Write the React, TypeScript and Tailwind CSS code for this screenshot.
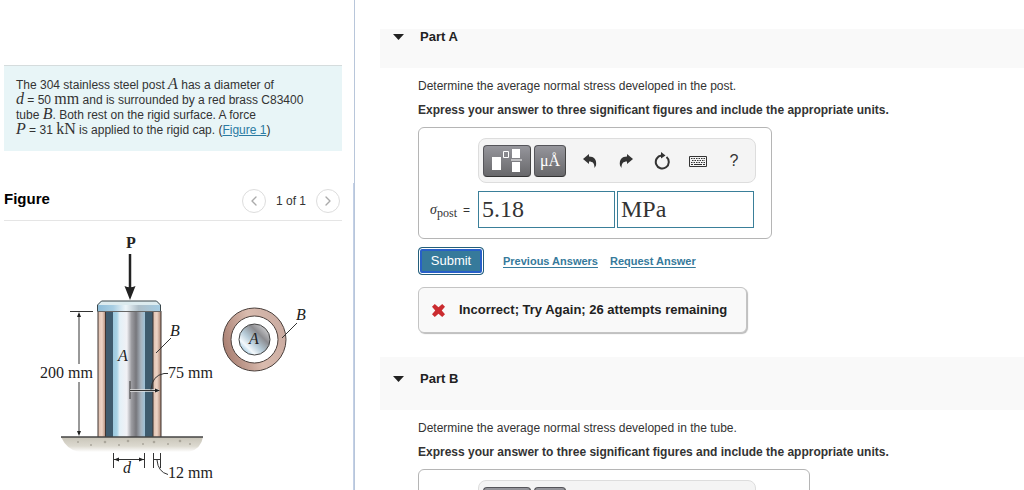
import type { ReactNode } from "react";
import { useState } from "react";
import { ChevronLeft, ChevronRight } from "lucide-react";

function PostFigure() {
  return (
    <svg
      viewBox="4 221 338 269"
      className="block w-full font-['Liberation_Serif',serif]"
      fontSize="16"
      fill="#222"
      role="img"
      aria-label="Post A inside tube B under load P"
    >
      <defs>
        <linearGradient id="steel">
          <stop offset="0" stopColor="#9cc9de" />
          <stop offset="0.12" stopColor="#a9d3e6" />
          <stop offset="0.2" stopColor="#e3f0f7" />
          <stop offset="0.42" stopColor="#f1f1f5" />
          <stop offset="0.56" stopColor="#9c9ca1" />
          <stop offset="0.7" stopColor="#77777c" />
          <stop offset="0.85" stopColor="#a9b4bf" />
          <stop offset="1" stopColor="#9cc6de" />
        </linearGradient>
        <linearGradient id="cap">
          <stop offset="0" stopColor="#8dbcd8" />
          <stop offset="0.25" stopColor="#a8cee3" />
          <stop offset="0.45" stopColor="#edf5f9" />
          <stop offset="0.65" stopColor="#aebfc9" />
          <stop offset="1" stopColor="#a4cce3" />
        </linearGradient>
        <linearGradient id="brass">
          <stop offset="0" stopColor="#dfbfae" />
          <stop offset="0.5" stopColor="#ecd4c6" />
          <stop offset="1" stopColor="#a98270" />
        </linearGradient>
        <linearGradient id="ring" x1="0" y1="0.6" x2="1" y2="0.3">
          <stop offset="0" stopColor="#a97f72" />
          <stop offset="0.5" stopColor="#d9bbae" />
          <stop offset="1" stopColor="#c9aaa0" />
        </linearGradient>
        <linearGradient id="disc" x1="0.1" y1="0.9" x2="0.85" y2="0.15">
          <stop offset="0" stopColor="#8fc0dc" />
          <stop offset="0.22" stopColor="#f4f9fc" />
          <stop offset="0.45" stopColor="#b6cbd8" />
          <stop offset="0.75" stopColor="#8c8c90" />
          <stop offset="1" stopColor="#c4c4c6" />
        </linearGradient>
        <linearGradient id="ground" x2="0" y2="1">
          <stop offset="0" stopColor="#c8c4b8" />
          <stop offset="0.6" stopColor="#dcd9cf" />
          <stop offset="1" stopColor="#fff" />
        </linearGradient>
      </defs>

      {/* load */}
      <text x="126" y="248" fontWeight="bold">P</text>
      <path d="M130 254v34" stroke="#222" strokeWidth="2.5" />
      <path d="M124.500 286q5.500 2.500 11 0L130 300z" />

      {/* ground */}
      <path d="M61 437h142q-2 12-14 15H79q-12-2-18-15z" fill="url(#ground)" />
      <g fill="#aaa69b">
        <circle cx="78" cy="442" r="1" />
        <circle cx="91" cy="445" r="1" />
        <circle cx="105" cy="442" r="1.300" />
        <circle cx="119" cy="445" r="1" />
        <circle cx="128" cy="441" r="1.300" />
        <circle cx="143" cy="444" r="1" />
        <circle cx="154" cy="442" r="1.300" />
        <circle cx="168" cy="444" r="1" />
        <circle cx="180" cy="441" r="1.300" />
        <circle cx="190" cy="444" r="1" />
      </g>

      {/* tube and post */}
      <rect x="98" y="311" width="8" height="126" fill="url(#brass)" />
      <rect x="105" y="311" width="8" height="126" fill="#3e5b6e" />
      <rect x="113" y="311" width="33" height="126" fill="url(#steel)" />
      <rect x="145" y="311" width="8" height="126" fill="#3e5b6e" />
      <rect x="153" y="311" width="8" height="126" fill="url(#brass)" />
      <path d="M98 311v126M161 311v126M153 311v126M105.500 311v126" stroke="#3f3430" />
      <path d="M97.500 305l4-4h55l4 4v6.500h-63z" fill="url(#cap)" />
      <path d="M97.500 305l4-4h55l4 4z" fill="#dcebef" />
      <path d="M97.500 311.500V305l4-4h55l4 4v6.500" fill="none" stroke="#3b474b" />
      <path d="M98 311.500h63" stroke="#666" />
      <path d="M61 437h142" stroke="#444" strokeWidth="1.500" />

      {/* dimensions */}
      <g stroke="#333" fill="none">
        <path d="M70 311.500h23M79 314v50M79 382v52" />
        <path d="M130 381v18" />
        <path d="M130 390.500h29" stroke="#e5e5e5" strokeWidth="2.500" />
        <path d="M130 390.500h29" />
        <path d="M168 373.500h-4q-12 2-13 16M171 338l-15 15" />
        <path d="M113.500 453v15M144.500 453v15M114 459.500h31" />
        <path d="M153.500 453v15M160.500 453v15M153 459.500h8M157 460q1 12 11 14.500" />
      </g>
      <path d="M79 312l2 5h-4zM79 436l2-5h-4zM160 390.500l-5-2v4zM114 459.500l5-2v4zM144 459.500l-5-2v4z" />
      <text x="40" y="378">200 mm</text>
      <text x="168" y="378">75 mm</text>
      <text x="168" y="478">12 mm</text>
      <g fontStyle="italic">
        <text x="118" y="361">A</text>
        <text x="170" y="336">B</text>
        <text x="123" y="473">d</text>
        <text x="296" y="320">B</text>
      </g>

      {/* section */}
      <circle cx="254.500" cy="339.500" r="31.500" fill="url(#ring)" stroke="#4b403c" />
      <circle cx="254.500" cy="339.500" r="23.500" fill="#fff" stroke="#4b403c" />
      <circle cx="254.500" cy="339.500" r="15.500" fill="url(#disc)" stroke="#444" />
      <path d="M297 323l-15 15" stroke="#333" />
      <text x="249" y="344" fontStyle="italic">A</text>
    </svg>
  );
}

function MathText({ children, italic = false }: { children: ReactNode; italic?: boolean }) {
  return (
    <span className={`font-['Liberation_Serif',serif] text-base leading-[8px] ${italic ? "italic" : ""}`}>
      {children}
    </span>
  );
}

function Toolbar() {
  const dark =
    "flex h-8 items-center justify-center rounded border border-[#55555a] border-b-[#333] border-r-[#444] bg-linear-to-b from-[#96969c] to-[#68686b] text-white";
  const plain = "flex h-8 w-9 items-center justify-center text-[#333]";

  return (
    <div className="flex h-[45px] w-[278px] items-center rounded-lg border border-[#ddd] bg-[#f4f4f4] pl-1">
      <button type="button" aria-label="Templates" className={`${dark} w-12`}>
        <svg width="30" height="25" viewBox="0 0 30 25" fill="currentColor">
          <path d="M0 9h9v13H0zM20 1h8v9h-8zM19 11.500h11v1H19zM20 14h8v10h-8z" />
          <path d="M11.500 3.500h5v6h-5z" fill="none" stroke="currentColor" />
        </svg>
      </button>
      <button
        type="button"
        aria-label="Symbols"
        className={`${dark} ml-[3px] w-8 font-['Liberation_Serif',serif] text-base`}
      >
        μÅ
      </button>
      <button type="button" aria-label="Undo" className={`${plain} ml-1.5`}>
        <svg width="14" height="14" viewBox="0 0 14 14" fill="currentColor">
          <path d="M0 5L6 0v2.500c5 0 8 3 7 9l-1.500 2.500C11.500 9.500 10 7.500 6 7.500V10z" />
        </svg>
      </button>
      <button type="button" aria-label="Redo" className={plain}>
        <svg width="14" height="14" viewBox="0 0 14 14" fill="currentColor">
          <path d="M14 5L8 0v2.500c-5 0-8 3-7 9L2.500 14C2.500 9.500 4 7.500 8 7.500V10z" />
        </svg>
      </button>
      <button type="button" aria-label="Reset" className={plain}>
        <svg width="18" height="18" viewBox="0 0 18 18" fill="none">
          <path d="M13.500 5A6.500 6.500 0 1 1 8.500 3.500" stroke="currentColor" strokeWidth="2" />
          <path d="M8 0l4.500 3.500L8 6.500z" fill="currentColor" />
        </svg>
      </button>
      <button type="button" aria-label="Keyboard" className={plain}>
        <svg width="18" height="12" viewBox="0 0 18 12" fill="none" stroke="currentColor">
          <path d="M.5 1.500h17v10H.5z" />
          <path d="M2 3.500h14M3 5.500h13M2 7.500h14" strokeDasharray="1.500 1" />
          <path d="M2 9.500h2M5 9.500h8M14 9.500h2" />
        </svg>
      </button>
      <button type="button" aria-label="Help" className={`${plain} text-base`}>
        ?
      </button>
    </div>
  );
}

function PartHeader({ title, className }: { title: string; className: string }) {
  return (
    <h2 className={`bg-[#f9f9f9] text-[13px] leading-4 font-bold text-[#222] ${className}`}>
      <button type="button" className="flex h-4 items-center gap-4 pl-[13px]">
        <svg width="11" height="6" viewBox="0 0 11 6" fill="currentColor">
          <path d="M0 0h11L5.500 6z" />
        </svg>
        {title}
      </button>
    </h2>
  );
}

function Instructions({ member }: { member: string }) {
  return (
    <div className="flex flex-col gap-2 pt-2.5 text-xs leading-4">
      <p>Determine the average normal stress developed in the {member}.</p>
      <p className="font-bold">
        Express your answer to three significant figures and include the appropriate units.
      </p>
    </div>
  );
}

export default function App() {
  const [value, setValue] = useState("5.18");
  const [units, setUnits] = useState("MPa");
  const field =
    "h-[37px] w-[137px] border border-[#3a7f99] bg-white px-[3px] font-['Liberation_Serif',serif] text-2xl text-[#333] outline-none";
  const pager = "flex size-6 items-center justify-center rounded-full border border-[#ddd] text-[#aaa]";
  const link = "text-[11px] font-bold text-[#367a9b] underline underline-offset-2";

  return (
    <div className="flex h-screen overflow-hidden bg-white font-['Liberation_Sans',Arial,sans-serif] text-[#333]">
      <aside className="flex w-[355px] shrink-0 flex-col border-r border-[#b8c6da] pt-[65px] pl-1">
        <section className="mr-3 border-t border-[#d5dcdd] bg-[#e8f5f7] px-3 pt-3 pb-[13px] text-xs">
          <p className="leading-[15px]">
            The 304 stainless steel post <MathText italic>A</MathText> has a diameter of
            <br />
            <MathText italic>d</MathText> = 50 <MathText>mm</MathText> and is surrounded by a red brass C83400
            <br />
            tube <MathText italic>B</MathText>. Both rest on the rigid surface. A force
            <br />
            <MathText italic>P</MathText> = 31 <MathText>kN</MathText> is applied to the rigid cap. (
            <a href="#figure" className="text-[#2b7ba3] underline">
              Figure 1
            </a>
            )
          </p>
        </section>

        <section id="figure" className="mt-8 flex-1 border-r border-[#c3d0e6] pt-1 pr-[11px]">
          <header className="flex h-[34px] items-start justify-between border-b border-[#e5e5e5]">
            <h2 className="text-[15px] leading-6 font-bold text-black">Figure</h2>
            <div className="flex items-center gap-2.5 pt-0.5 pr-0.5 text-xs">
              <button type="button" aria-label="Previous figure" className={pager}>
                <ChevronLeft size={16} />
              </button>
              <span>1 of 1</span>
              <button type="button" aria-label="Next figure" className={pager}>
                <ChevronRight size={16} />
              </button>
            </div>
          </header>
          <PostFigure />
        </section>
      </aside>

      <main className="min-w-0 flex-1 pt-[29px] pl-[25px]">
        <section>
          <PartHeader title="Part A" className="pb-[23px]" />
          <form className="pl-[38px]" onSubmit={(e) => e.preventDefault()}>
            <Instructions member="post" />
            <div className="mt-[9px] flex w-[354px] flex-col items-end gap-2 rounded-md border border-[#b5b5b5] pt-2.5 pr-[15px] pb-2.5">
              <Toolbar />
              <div className="flex items-center">
                <label htmlFor="stress" className="flex items-center gap-1.5 pr-2 text-xs">
                  <span className="font-['Liberation_Serif',serif] text-sm">
                    <i>σ</i>
                    <sub className="text-xs">post</sub>
                  </span>
                  <span>=</span>
                </label>
                <div className="flex w-[278px] gap-0.5">
                  <input id="stress" value={value} onChange={(e) => setValue(e.target.value)} className={field} />
                  <input
                    aria-label="Units"
                    value={units}
                    onChange={(e) => setUnits(e.target.value)}
                    className={field}
                  />
                </div>
              </div>
            </div>

            <div className="mt-2 flex items-center">
              <button
                type="submit"
                className="h-7 w-[66px] rounded-sm border border-[#245f7a] bg-[#367a9b] text-[13px] text-white shadow-[inset_0_0_0_1px_#fff,inset_0_0_0_3px_#2860c8]"
              >
                Submit
              </button>
              <a href="#previous" className={`${link} ml-[19px]`}>
                Previous Answers
              </a>
              <a href="#request" className={`${link} ml-3`}>
                Request Answer
              </a>
            </div>

            <div
              role="status"
              className="mt-3 flex h-[46px] w-[329px] items-center gap-3.5 rounded-md border border-[#c4c4c4] bg-[#f9f9f9] pl-[13px] text-[13px] font-bold whitespace-nowrap text-[#222] shadow-[1px_1px_1px_#bbb]"
            >
              <svg width="13" height="13" viewBox="0 0 14 14" fill="#cb2c30" className="shrink-0">
                <path d="M3 0l4 3.500L11 0l3 3-3.500 4L14 11l-3 3-4-3.500L3 14l-3-3 3.500-4L0 3z" />
              </svg>
              Incorrect; Try Again; 26 attempts remaining
            </div>
          </form>
        </section>

        <section className="mt-6">
          <PartHeader title="Part B" className="pt-3.5 pb-[23px]" />
          <div className="pl-[38px]">
            <Instructions member="tube" />
            <div className="mt-[9px] h-28 w-[392px] rounded-md border border-[#b5b5b5] pt-2.5 pl-[59px]">
              <Toolbar />
            </div>
          </div>
        </section>
      </main>
    </div>
  );
}
